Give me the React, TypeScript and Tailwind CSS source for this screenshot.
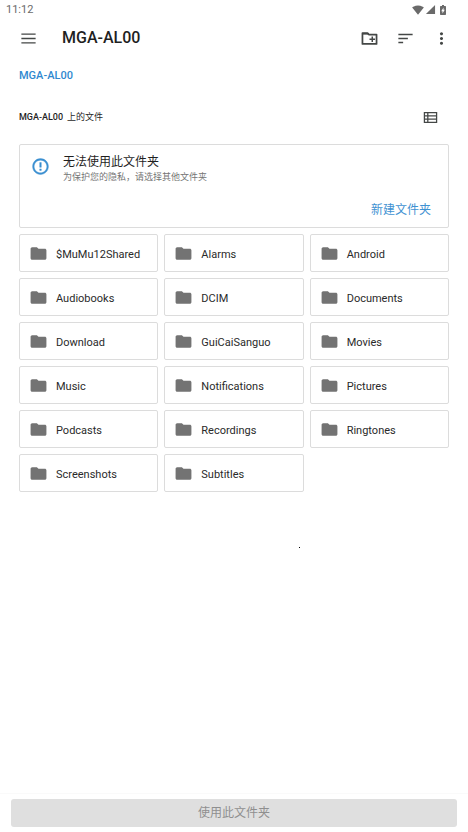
import {
  MdFolder,
  MdMoreVert,
  MdOutlineErrorOutline,
  MdSignalCellular4Bar,
  MdSignalWifi4Bar,
} from "react-icons/md";

const folders = [
  "$MuMu12Shared",
  "Alarms",
  "Android",
  "Audiobooks",
  "DCIM",
  "Documents",
  "Download",
  "GuiCaiSanguo",
  "Movies",
  "Music",
  "Notifications",
  "Pictures",
  "Podcasts",
  "Recordings",
  "Ringtones",
  "Screenshots",
  "Subtitles",
];

const BatteryIcon = () => (
  <svg className="ml-1 h-[10px] w-[6px]" viewBox="0 0 12 20" fill="currentColor">
    <path
      fillRule="evenodd"
      d="M4 0h4v2h2.600a1.400 1.400 0 0 1 1.400 1.400v15.200a1.400 1.400 0 0 1-1.400 1.400H1.400A1.400 1.400 0 0 1 0 18.600V3.400A1.400 1.400 0 0 1 1.400 2H4V0zm3 5-4.500 7.500H5V17l4.500-7.500H7V5z"
    />
  </svg>
);

const MenuIcon = () => (
  <svg
    className="h-[19px] w-[19px]"
    viewBox="0 0 24 24"
    stroke="currentColor"
    strokeWidth="1.6"
  >
    <path d="M3 6.500h18M3 12h18M3 17.500h18" />
  </svg>
);

const NewFolderIcon = () => (
  <svg
    className="h-[19px] w-[19px]"
    viewBox="0 0 24 24"
    fill="none"
    stroke="currentColor"
    strokeWidth="2.200"
  >
    <path d="M3.100 5.100h6.300l2 2h9.500v11.800H3.100z" strokeLinejoin="round" />
    <path d="M3 6h8" />
    <path d="M15.500 9.500v7M12 13h7" strokeWidth="1.900" />
  </svg>
);

const SortIcon = () => (
  <svg
    className="h-[19px] w-[19px]"
    viewBox="0 0 24 24"
    stroke="currentColor"
    strokeWidth="1.700"
  >
    <path d="M3 7h18M3 12h12M3 17h6" />
  </svg>
);

const ListIcon = () => (
  <svg
    className="h-[19px] w-[19px]"
    viewBox="0 0 24 24"
    fill="none"
    stroke="currentColor"
    strokeWidth="1.600"
  >
    <path d="M4.300 5.800h15.400v12.400H4.300zM8.600 5.800v12.400M4.300 9.900h15.400M4.300 14.100h15.400" />
  </svg>
);

const StatusBar = () => {
  return (
    <div className="flex h-[19px] items-center justify-between pl-[6px] pr-[22px] text-[#6a6a6a]">
      <span className="text-[11px] leading-4">11:12</span>
      <div className="flex items-center">
        <MdSignalWifi4Bar className="h-3 w-3" />
        <MdSignalCellular4Bar className="ml-px h-[11px] w-[11px]" />
        <BatteryIcon />
      </div>
    </div>
  );
};

const Toolbar = () => {
  return (
    <header className="flex h-[38px] items-center pl-[19px] pr-[17px] text-[#444746]">
      <button type="button" aria-label="菜单">
        <MenuIcon />
      </button>
      <h1 className="ml-6 flex-1 text-base font-medium text-[#1f1f1f]">
        MGA-AL00
      </h1>
      <div className="flex items-center gap-[17px]">
        <button type="button" aria-label="新建文件夹">
          <NewFolderIcon />
        </button>
        <button type="button" aria-label="排序">
          <SortIcon />
        </button>
        <button type="button" aria-label="更多选项">
          <MdMoreVert className="h-[19px] w-[19px]" />
        </button>
      </div>
    </header>
  );
};

const Notice = () => {
  return (
    <section className="flex h-[84px] flex-col rounded-xs border border-[#dcdcdc] pl-[11px] pr-[17px] pt-2">
      <div className="flex gap-[13px]">
        <MdOutlineErrorOutline className="mt-1 h-[19px] w-[19px] stroke-current stroke-[0.5] text-[#3a8fd0]" />
        <div>
          <h2 className="text-[12px] leading-[18px] text-[#1f1f1f]">
            无法使用此文件夹
          </h2>
          <p className="text-[9px] leading-3 text-[#757575]">
            为保护您的隐私，请选择其他文件夹
          </p>
        </div>
      </div>
      <button
        type="button"
        className="mt-auto mb-2 self-end text-[12px] leading-[18px] text-[#3f92d2]"
      >
        新建文件夹
      </button>
    </section>
  );
};

const App = () => {
  return (
    <div className="relative flex min-h-screen flex-col bg-white font-['Roboto','Noto_Sans_CJK_SC',sans-serif]">
      <StatusBar />
      <Toolbar />

      <main className="flex-1 px-[19px]">
        <nav className="flex h-[38px] items-center">
          <a href="#" className="text-[11px] font-medium text-[#2f88cf]">
            MGA-AL00
          </a>
        </nav>

        <div className="flex h-[49px] items-center justify-between pb-1 pr-[9px]">
          <h2 className="flex items-center gap-1 text-[9px] font-medium text-[#1f1f1f]">
            MGA-AL00 <span className="font-normal">上的文件</span>
          </h2>
          <button type="button" aria-label="列表视图" className="text-[#444746]">
            <ListIcon />
          </button>
        </div>

        <Notice />

        <ul className="mt-[6px] grid grid-cols-3 gap-[6px]">
          {folders.map((name) => (
            <li key={name}>
              <button
                type="button"
                className="flex h-[38px] w-full items-center gap-2 rounded-xs border border-[#dcdcdc] pl-[9px] text-[11px] text-[#2a2a2a]"
              >
                <MdFolder className="h-[19px] w-[19px] text-[#737373]" />
                <span className="pt-[3px] leading-4">{name}</span>
              </button>
            </li>
          ))}
        </ul>
      </main>

      {/* pointer */}
      <span className="absolute left-[299px] top-[547px] h-px w-px bg-black" />

      <footer className="border-t border-[#fafafa] px-[11px] py-[5px]">
        <button
          type="button"
          disabled
          className="h-7 w-full rounded-[3px] bg-[#dfdfdf] text-[12px] text-[#8f8f8f]"
        >
          使用此文件夹
        </button>
      </footer>
    </div>
  );
};

export default App;
